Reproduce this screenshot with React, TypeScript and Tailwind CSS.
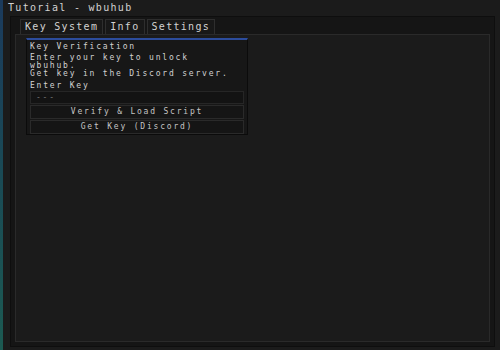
import React from 'react';

const mono = { fontFamily: '"DejaVu Sans Mono", "Liberation Mono", monospace' };

const tabs = ['Key System', 'Info', 'Settings'];

export default function App() {
  return (
    <div className="w-[500px] h-[350px] flex bg-[#1b1b1b] overflow-hidden text-[#d2d2d2]" style={mono}>
      <div className="w-[3px] bg-gradient-to-b from-[#1b3a5c] via-[#1a4a55] to-[#1c5a52]" />
      <div className="flex-1 flex flex-col pl-[7px] pr-[5px] pb-[3px]">
        <div className="h-[16px] -ml-[2px] flex items-center text-[10px] leading-none tracking-[1.3px]">
          Tutorial - wbuhub
        </div>
        <div className="flex-1 flex flex-col border border-[#0e0e0e] bg-[#151515]">
          <div className="h-[17px] flex items-end pl-[9px] gap-[2px]">
            {tabs.map((t) => (
              <div
                key={t}
                className="h-[15px] px-[4px] flex items-center border border-b-0 border-[#2e2e2e] bg-[#181818] text-[10px] leading-none tracking-[1.3px]"
              >
                {t}
              </div>
            ))}
          </div>
          <div className="flex-1 mx-[4px] mb-[4px] border border-[#2a2a2a] bg-[#1b1b1b] pt-[3px] pl-[10px]">
            <div className="w-[222px] h-[97px] border border-[#0b0b0b] border-t-2 border-t-[#2c4c9c] bg-[#171717] px-[3px] pt-[2px] text-[8px] leading-[8px] tracking-[1.8px]">
              <div className="h-[9px] flex items-center">Key Verification</div>
              <div className="mt-[3px]">Enter your key to unlock</div>
              <div>wbuhub.</div>
              <div>Get key in the Discord server.</div>
              <div className="mt-[4px]">Enter Key</div>
              <div className="mt-[1px] h-[13px] border border-[#262626] bg-[#131313] flex items-center pl-[5px] text-[#777]">
                ---
              </div>
              <div className="mt-[1px] h-[14px] border border-[#2a2a2a] bg-[#151515] flex items-center justify-center text-[#c4c4c4]">
                Verify &amp; Load Script
              </div>
              <div className="mt-[1px] h-[14px] border border-[#2a2a2a] bg-[#151515] flex items-center justify-center text-[#c4c4c4]">
                Get Key (Discord)
              </div>
            </div>
          </div>
        </div>
      </div>
    </div>
  );
}
